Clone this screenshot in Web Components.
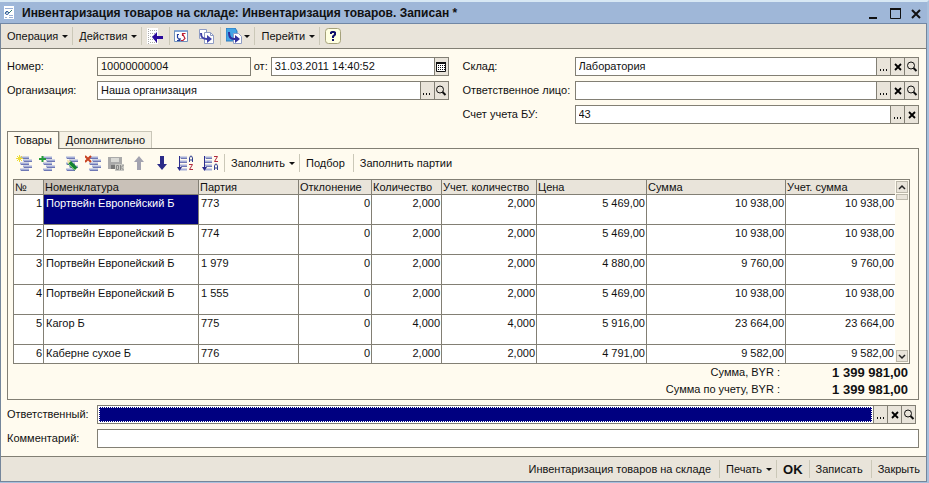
<!DOCTYPE html>
<html lang="ru">
<head>
<meta charset="utf-8">
<title>Инвентаризация товаров на складе</title>
<style>
    body {
        margin: 0;
        font: 11px/15px "Liberation Sans", Arial, sans-serif;
        color: #111;
        --line: #827f74;
        --face: #e9e4da;
        --paper: #fffbef;
        --navy: #000080;
    }
</style>
</head>
<body>
<app-window heading="Инвентаризация товаров на складе: Инвентаризация товаров. Записан *">
    <tool-bar slot="menu">
        <tool-button menu>Операция</tool-button>
        <tool-button menu>Действия</tool-button>
        <tool-button icon="back" label="Назад"></tool-button>
        <tool-button icon="refresh" label="Обновить" joined></tool-button>
        <tool-button icon="copy" label="Скопировать"></tool-button>
        <tool-button icon="basis" label="Ввести на основании" menu></tool-button>
        <tool-button menu>Перейти</tool-button>
        <tool-button icon="help" label="Справка"></tool-button>
    </tool-bar>

    <form-columns>
        <field-row>
            <form-field label="Номер:" value="10000000004" readonly></form-field>
            <form-field label="от:" value="31.03.2011 14:40:52" buttons="calendar" compact></form-field>
        </field-row>
        <form-field label="Организация:" value="Наша организация" buttons="dots find"></form-field>
        <form-field slot="right" label="Склад:" value="Лаборатория" buttons="dots clear find"></form-field>
        <form-field slot="right" label="Ответственное лицо:" buttons="dots clear find"></form-field>
        <form-field slot="right" label="Счет учета БУ:" value="43" buttons="dots clear"></form-field>
    </form-columns>

    <tab-panel tabs="Товары,Дополнительно">
        <tool-bar dense>
            <tool-button icon="add" label="Добавить" joined></tool-button>
            <tool-button icon="insert" label="Скопировать строку" joined></tool-button>
            <tool-button icon="edit" label="Изменить" joined></tool-button>
            <tool-button icon="remove" label="Удалить" joined></tool-button>
            <tool-button icon="save" label="Закончить редактирование" joined></tool-button>
            <tool-button icon="up" label="Вверх" joined></tool-button>
            <tool-button icon="down" label="Вниз" joined></tool-button>
            <tool-button icon="sortAz" label="По возрастанию" joined></tool-button>
            <tool-button icon="sortZa" label="По убыванию"></tool-button>
            <tool-button menu>Заполнить</tool-button>
            <tool-button>Подбор</tool-button>
            <tool-button>Заполнить партии</tool-button>
        </tool-bar>
        <goods-table></goods-table>
        <total-line label="Сумма, BYR :">1 399 981,00</total-line>
        <total-line label="Сумма по учету, BYR :">1 399 981,00</total-line>
    </tab-panel>

    <form-field class="person" label="Ответственный:" buttons="dots clear find" selected></form-field>
    <form-field label="Комментарий:"></form-field>

    <tool-bar slot="footer" end>
        <tool-button>Инвентаризация товаров на складе</tool-button>
        <tool-button menu>Печать</tool-button>
        <tool-button strong>OK</tool-button>
        <tool-button>Записать</tool-button>
        <tool-button>Закрыть</tool-button>
    </tool-bar>
</app-window>

<script>
const rowLines = `
    <path d="M4 2.500h9M7 5.500h9M4 8.500h9M7 11.500h9M4 14.500h9" stroke="#a5afd8" stroke-width="2"/>
    <path d="M5 3.500h8M8 6.500h8M5 9.500h8M8 12.500h8M5 15.500h8" stroke="#6f78b4"/>`;

const sheet = `
    <path d="M1.500 1.500h7v9h-7z" fill="#fff" stroke="#8f9cc4"/>
    <path d="M6.500 4.500h6l3 3v8h-9z" fill="#fff" stroke="#8f9cc4"/>
    <path d="M12.500 4.500v3h3" fill="none" stroke="#8f9cc4"/>`;

const sortLines = `
    <path d="M3 2.500h7M3 6.500h7M3 10.500h7M3 14.500h7" stroke="#a5afd8" stroke-width="2"/>
    <path d="M4 3.500h6M3 7.500h7M4 11.500h6" stroke="#6f78b4"/>
    <path d="M2.500 1v12" stroke="#2c2c8c"/><path d="M0 12h5l-2.500 4z" fill="#2c2c8c"/>`;

const letterA = (y, c) => `<path d="M12.500 ${y + 6}v-4l1-2h1l1 2v4M12.500 ${y + 4}h3" fill="none" stroke="${c}"/>`;
const letterZ = (y, c) => `<path d="M12 ${y + .5}h3.500l-3 5h3.500" fill="none" stroke="${c}"/>`;

const icons = {
    doc: `<path d="M1.500.500h11v14h-11z" fill="#fff" stroke="#9cb7dc"/><path d="M3 3.500h8M3 12.500h2M7 10.500h4M7 12.500h4" stroke="#9ab0d6"/><path d="M3 9l2-3 2 2 3-3" fill="none" stroke="#367a70"/><circle cx="5" cy="8" r="1.500" fill="none" stroke="#3961a4"/>`,
    back: `<path d="M0 0h11v16H0z" fill="#fff"/><path d="M3 2.500h7M3 5.500h7M3 8.500h4M3 11.500h7M3 14.500h7M1.500 1v15" stroke="#aaa" stroke-dasharray="1 1"/><path d="M5 9l5-5v4h6v3h-6v4z" fill="#2a0a9c"/>`,
    refresh: `<path d="M1.500 2.500h13v11h-13z" fill="#fff" stroke="#7190bc"/><path d="M2 3h12" stroke="#82a5d5" stroke-width="2"/><path d="M6 6.500H4.500v3l2 2.500M4 12.500h3V10" fill="none" stroke="#223f9e" stroke-width="1.200"/><path d="M8 12.500h2l2-2-2-4M12.500 5.500H9.500V8" fill="none" stroke="#bc2035" stroke-width="1.200"/>`,
    copy: sheet + `<path d="M3 5c0 5 2 6 6 6" fill="none" stroke="#3f3fa8" stroke-width="2"/><path d="M9 7l5 4-5 4z" fill="#3f3fa8"/>`,
    basis: `<path d="M0 0h9l2 3v10H0z" fill="#43a5e5" stroke="#2d78bd"/><path d="M7.500 5.500h5l3 3v7h-8z" fill="#fff" stroke="#8f9cc4"/><path d="M3 4c0 6 2 7 6 7" fill="none" stroke="#2f2f9c" stroke-width="2"/><path d="M9 7l5 4-5 4z" fill="#2f2f9c"/>`,
    help: `<rect x=".5" y=".5" width="15" height="15" rx="3" fill="#ffffe1" stroke="#a5a17b"/><path d="M6 6V4.500L7 4h2l1 .500v2L8 8.500V10M8 11v2" fill="none" stroke="#10106c" stroke-width="2"/>`,
    add: rowLines + `<path d="M3.500 0v7M0 3.500h7M1 1l5 5M6 1L1 6" stroke="#eddc38"/>`,
    insert: rowLines + `<path d="M3.500 1v6M0 4h7" stroke="#269b3b" stroke-width="2"/>`,
    edit: rowLines + `<path d="M7 7l7 7" stroke="#148332" stroke-width="4"/><path d="M6 8l7 7" stroke="#73cc61"/><path d="M5 5l1 4 3-3z" fill="#eee0a8"/>`,
    remove: rowLines + `<path d="M0 1l6 6M6 1L0 7" stroke="#c84222" stroke-width="2"/>`,
    save: `<path d="M0 2h14v12H0z" fill="#aaa"/><path d="M3 3h8v4H3z" fill="#d9d9d5"/><path d="M3 10h5v4H3z" fill="#777"/><path d="M7 9h9v7H7z" fill="#c9c9c4"/><path d="M8.500 10.500h2v4h-2zM12.500 10v5M15.500 10l-2.500 2.500 2.500 2.500" fill="none" stroke="#888"/>`,
    up: `<path d="M8 1l5 6h-3v8H6V7H3z" fill="#a3a3b0"/>`,
    down: `<path d="M6 1h4v8h3l-5 6-5-6h3z" fill="#2b2b88"/>`,
    sortAz: sortLines + letterA(1, '#33418f') + letterZ(9, '#b02a3c'),
    sortZa: sortLines + letterZ(1, '#b02a3c') + letterA(9, '#33418f'),
    dots: `<path d="M4 10h1v2H4zM7 10h1v2H7zM10 10h1v2h-1z" fill="#111"/>`,
    clear: `<path d="M5 5l6 6M11 5l-6 6" stroke="#000" stroke-width="1.800"/>`,
    find: `<circle cx="7" cy="6.500" r="3.500" fill="none" stroke="#111"/><path d="M9.500 9l3 3" stroke="#111" stroke-width="2"/>`,
    calendar: `<path d="M3.500 3.500h9v9h-9z" fill="#fff" stroke="#111"/><path d="M3 4h10" stroke="#111" stroke-width="2"/><path d="M5 6.500h7M5 8.500h7M5 10.500h7" stroke="#111" stroke-dasharray="1 1"/>`,
    minimize: `<path d="M3 12h8v2H3z" fill="#111"/>`,
    maximize: `<path d="M3.500 3.500h10v10h-10z" fill="none" stroke="#111"/><path d="M3 4h11" stroke="#111" stroke-width="2"/>`,
    close: `<path d="M4 5l8 8M12 5l-8 8" stroke="#111" stroke-width="2"/>`,
    chevronUp: `<path d="M5 10l3-3 3 3" fill="none" stroke="#222" stroke-width="1.500"/>`,
    chevronDown: `<path d="M5 7l3 3 3-3" fill="none" stroke="#222" stroke-width="1.500"/>`,
};

const svg = name => `<svg viewBox="0 0 16 16" width="16" height="16" aria-hidden="true">${icons[name]}</svg>`;

const names = { dots: 'Выбрать', clear: 'Очистить', find: 'Открыть', calendar: 'Календарь' };

class AppWindow extends HTMLElement {
    constructor() {
        super();
        this.attachShadow({ mode: 'open' }).innerHTML = `
            <style>
                :host { display: flex; flex-direction: column; height: 100vh; min-height: 400px; box-sizing: border-box;
                    border-top: 2px solid #d8e8f4; border-right: 2px solid #a8c0dc; border-bottom: 1px solid #a8c0dc; }
                header { display: flex; align-items: center; gap: 4px; height: 21px; padding: 0 2px;
                    background: #9fb7d8; border-bottom: 1px solid #7187a5; flex: none; }
                h1 { flex: 1; margin: 0; padding-top: 2px; font-size: 12px; white-space: nowrap; }
                header button { width: 17px; height: 16px; padding: 0; border: 0; background: none; }
                header svg { display: block; }
                .frame { flex: 1; min-height: 0; display: flex; flex-direction: column;
                    border: solid #75869b; border-width: 0 1px 1px; background: var(--paper); }
                main { flex: 1; min-height: 0; display: flex; flex-direction: column; gap: 5px; padding: 8px 7px 8px 6px; }
                slot[name=menu] { display: block; border-bottom: 1px solid var(--line); background: var(--face); }
                slot[name=footer] { display: block; border-top: 1px solid var(--line); background: var(--face); }
                ::slotted(.person) { margin-right: 3px; }
            </style>
            <header>
                ${svg('doc')}<h1>${this.getAttribute('heading')}</h1>
                <button aria-label="Свернуть">${svg('minimize')}</button>
                <button aria-label="Развернуть">${svg('maximize')}</button>
                <button aria-label="Закрыть окно">${svg('close')}</button>
            </header>
            <div class="frame">
                <slot name="menu"></slot>
                <main><slot></slot></main>
                <slot name="footer"></slot>
            </div>`;
    }
}

class ToolBar extends HTMLElement {
    constructor() {
        super();
        this.attachShadow({ mode: 'open' }).innerHTML = `
            <style>
                :host { display: flex; align-items: center; height: 24px; }
                :host([end]) { justify-content: flex-end; }
                :host([dense]) { height: 28px; padding-bottom: 2px; flex: none; }
            </style>
            <slot></slot>`;
    }
}

class ToolButton extends HTMLElement {
    constructor() {
        super();
        const icon = this.getAttribute('icon');
        const label = this.getAttribute('label');
        this.attachShadow({ mode: 'open' }).innerHTML = `
            <style>
                :host { display: block; border-right: 1px solid #cbc8b8; }
                :host([joined]) { border-color: transparent; }
                :host(:last-child) { border: 0; }
                button { display: flex; align-items: center; height: 18px; padding: 0 8px 0 6px; border: 0;
                    background: none; color: inherit; font: inherit; white-space: nowrap; }
                :host([menu]) button { padding-right: 4px; }
                :host(:last-child) button { padding-right: 6px; }
                button.icon { padding: 0 6px 0 5px; }
                :host([joined]) button.icon { padding: 0 3px; }
                :host([strong]) button { padding-right: 6px; font-weight: bold; font-size: 13px; }
                i { margin-left: 4px; border: 3px solid transparent; border-top-color: #111; border-bottom: 0; }
                .icon i { margin-left: 2px; }
            </style>
            <button class="${icon ? 'icon' : ''}" ${label ? `aria-label="${label}"` : ''}>
                ${icon ? svg(icon) : ''}<slot></slot>${this.hasAttribute('menu') ? '<i></i>' : ''}
            </button>`;
    }
}

class FormColumns extends HTMLElement {
    constructor() {
        super();
        this.attachShadow({ mode: 'open' }).innerHTML = `
            <style>
                :host { display: grid; grid-template-columns: 442fr 457fr; gap: 14px; margin-bottom: 2px; }
                div { display: flex; flex-direction: column; gap: 5px; min-width: 0; }
                .right { --label: 112px; }
            </style>
            <div><slot></slot></div>
            <div class="right"><slot name="right"></slot></div>`;
    }
}

class FieldRow extends HTMLElement {
    constructor() {
        super();
        this.attachShadow({ mode: 'open' }).innerHTML = `
            <style>
                :host { display: grid; grid-template-columns: 244fr 195fr; gap: 3px; }
            </style>
            <slot></slot>`;
    }
}

class FormField extends HTMLElement {
    constructor() {
        super();
        const buttons = (this.getAttribute('buttons') || '').split(' ').filter(b => b);
        const value = this.getAttribute('value') || '';
        this.attachShadow({ mode: 'open' }).innerHTML = `
            <style>
                :host { display: flex; align-items: center; height: 19px; min-width: 0; flex: none; }
                label { width: var(--label, 90px); flex: none; white-space: nowrap; }
                :host([compact]) label { width: 17px; }
                .box { flex: 1; min-width: 0; display: flex; height: 17px; border: 1px solid var(--line); background: #fff; }
                :host([readonly]) .box { background: var(--paper); }
                input { flex: 1; min-width: 0; padding: 0 3px; border: 0; outline: 0; background: none; color: inherit; font: inherit; }
                :host([selected]) input { margin: 1px; background: var(--navy); border: 1px dotted #fff; color: #fff; }
                button { width: 14px; padding: 0; border: 0; border-left: 1px solid var(--line); background: var(--face);
                    display: flex; align-items: center; justify-content: center; }
                svg { flex: none; }
            </style>
            <label for="input">${this.getAttribute('label')}</label>
            <div class="box">
                <input id="input" value="${value}" ${this.hasAttribute('readonly') ? 'readonly' : ''}>
                ${buttons.map(b => `<button aria-label="${names[b]}">${svg(b)}</button>`).join('')}
            </div>`;
    }
}

class TabPanel extends HTMLElement {
    constructor() {
        super();
        const tabs = this.getAttribute('tabs').split(',');
        this.attachShadow({ mode: 'open' }).innerHTML = `
            <style>
                :host { display: flex; flex-direction: column; flex: 1; min-height: 0; }
                nav { display: flex; }
                button { height: 17px; padding: 0 6px; border: 1px solid #c9c6b8; border-bottom: 0;
                    background: #f6f2e6; color: inherit; font: inherit; }
                button[aria-selected=true] { height: 18px; margin-bottom: -1px; border-color: var(--line);
                    background: var(--paper); z-index: 1; }
                section { flex: 1; min-height: 0; display: flex; flex-direction: column; padding: 0 8px 1px 5px; border: 1px solid var(--line); }
            </style>
            <nav role="tablist">
                ${tabs.map((t, i) => `<button role="tab" aria-selected="${i === 0}">${t}</button>`).join('')}
            </nav>
            <section><slot></slot></section>`;
    }
}

const columns = [
    ['№', 30], ['Номенклатура', 155], ['Партия', 100], ['Отклонение', 73], ['Количество', 70],
    ['Учет. количество', 95], ['Цена', 110], ['Сумма', 139], ['Учет. сумма', 0],
];

const goods = [
    ['1', 'Портвейн Европейский Б', '773', '0', '2,000', '2,000', '5 469,00', '10 938,00', '10 938,00'],
    ['2', 'Портвейн Европейский Б', '774', '0', '2,000', '2,000', '5 469,00', '10 938,00', '10 938,00'],
    ['3', 'Портвейн Европейский Б', '1 979', '0', '2,000', '2,000', '4 880,00', '9 760,00', '9 760,00'],
    ['4', 'Портвейн Европейский Б', '1 555', '0', '2,000', '2,000', '5 469,00', '10 938,00', '10 938,00'],
    ['5', 'Кагор Б', '775', '0', '4,000', '4,000', '5 916,00', '23 664,00', '23 664,00'],
    ['6', 'Каберне сухое Б', '776', '0', '2,000', '2,000', '4 791,00', '9 582,00', '9 582,00'],
];

class GoodsTable extends HTMLElement {
    constructor() {
        super();
        this.attachShadow({ mode: 'open' }).innerHTML = `
            <style>
                :host { display: flex; flex: 1; min-height: 0; border: 1px solid var(--line); background: #fff; }
                .view { flex: 1; min-width: 0; overflow: hidden; }
                table { width: 100%; table-layout: fixed; border-collapse: separate; border-spacing: 0; }
                th, td { box-sizing: border-box; padding: 0 1px; overflow: hidden; white-space: nowrap; vertical-align: top;
                    border: solid var(--line); border-width: 0 1px 1px 0; }
                th:last-child, td:last-child { border-right: 0; }
                th { height: 15px; line-height: 14px; background: var(--face); font-weight: normal; text-align: left; }
                th.current { background: #c9c1b8; }
                td { height: 30px; padding-top: 1px; text-align: right; }
                td:nth-child(2), td:nth-child(3) { padding-left: 2px; text-align: left; }
                td.current { background: var(--navy); color: #fff; }
                .scroll { display: flex; flex-direction: column; gap: 1px; width: 12px; padding: 1px; background: var(--paper); }
                .scroll button { display: flex; align-items: center; justify-content: center; height: 12px; padding: 0;
                    border: 1px solid #bcb8ab; background: var(--face); }
                .scroll svg { flex: none; }
                .thumb { height: 4px; border: 1px solid #bcb8ab; background: var(--face); }
                .track { flex: 1; }
            </style>
            <div class="view">
                <table>
                    <colgroup>${columns.map(c => c[1] ? `<col style="width:${c[1]}px">` : '<col>').join('')}</colgroup>
                    <thead><tr>${columns.map((c, i) => `<th class="${i === 1 ? 'current' : ''}">${c[0]}</th>`).join('')}</tr></thead>
                    <tbody>${goods.map((row, r) => `<tr>${row.map((v, i) =>
                        `<td class="${r === 0 && i === 1 ? 'current' : ''}">${v}</td>`).join('')}</tr>`).join('')}</tbody>
                </table>
            </div>
            <div class="scroll">
                <button aria-label="Прокрутить вверх">${svg('chevronUp')}</button>
                <div class="thumb"></div>
                <div class="track"></div>
                <button aria-label="Прокрутить вниз">${svg('chevronDown')}</button>
            </div>`;
    }
}

class TotalLine extends HTMLElement {
    constructor() {
        super();
        this.attachShadow({ mode: 'open' }).innerHTML = `
            <style>
                :host { display: flex; justify-content: flex-end; flex: none; line-height: 17px; padding-right: 2px; }
                b { width: 128px; text-align: right; font-size: 13px; }
            </style>
            <span>${this.getAttribute('label')}</span><b><slot></slot></b>`;
    }
}

window.customElements.define('app-window', AppWindow);
window.customElements.define('tool-bar', ToolBar);
window.customElements.define('tool-button', ToolButton);
window.customElements.define('form-columns', FormColumns);
window.customElements.define('field-row', FieldRow);
window.customElements.define('form-field', FormField);
window.customElements.define('tab-panel', TabPanel);
window.customElements.define('goods-table', GoodsTable);
window.customElements.define('total-line', TotalLine);
</script>
</body>
</html>
